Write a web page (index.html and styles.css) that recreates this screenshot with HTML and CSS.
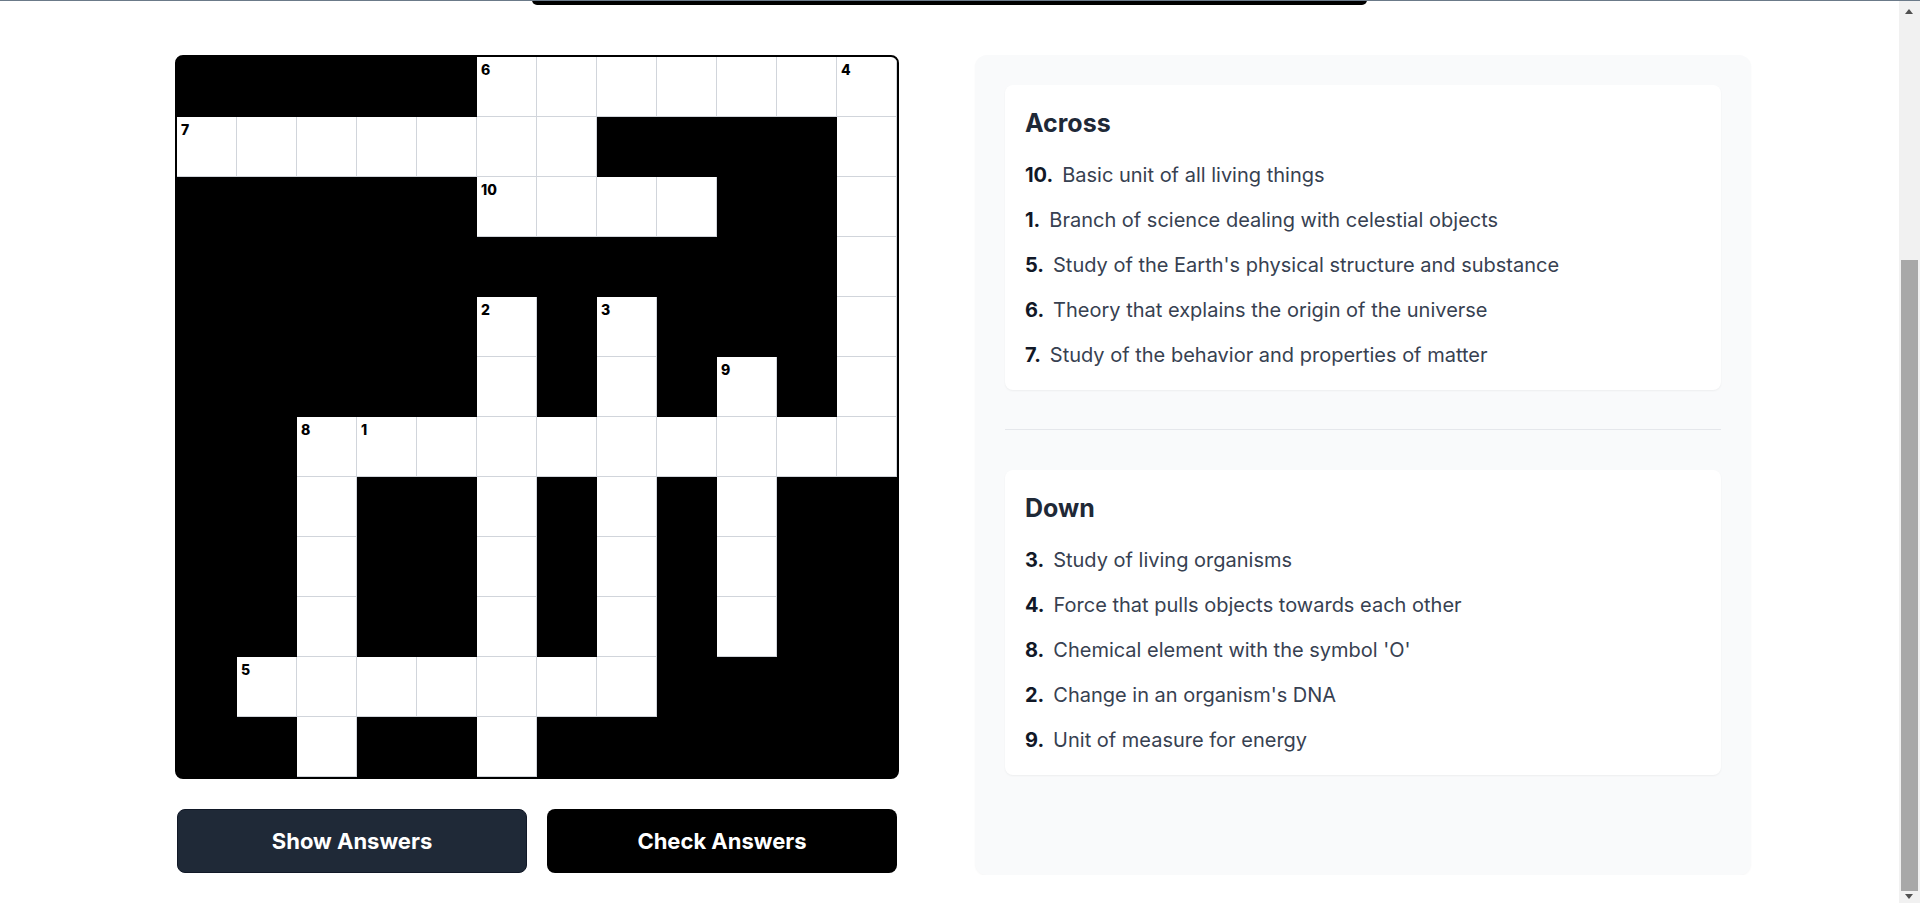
FILE: index.html
```html
<!DOCTYPE html>
<html lang="en">
<head>
<meta charset="utf-8">
<title>Science Crossword</title>
<link rel="stylesheet" href="styles.css">
</head>
<body>
<div class="frame-line"></div>
<div class="scrollbar" aria-hidden="true">
  <span class="arrow arrow-up"></span>
  <span class="thumb"></span>
  <span class="arrow arrow-down"></span>
</div>
<div class="page">
  <div class="top-tab"></div>
  <main class="layout">
    <section class="board">
      <div class="grid">
        <div class="cell block"></div><div class="cell block"></div><div class="cell block"></div><div class="cell block"></div><div class="cell block"></div><div class="cell"><span class="num">6</span></div><div class="cell"></div><div class="cell"></div><div class="cell"></div><div class="cell"></div><div class="cell"></div><div class="cell"><span class="num">4</span></div>
        <div class="cell"><span class="num">7</span></div><div class="cell"></div><div class="cell"></div><div class="cell"></div><div class="cell"></div><div class="cell"></div><div class="cell"></div><div class="cell block"></div><div class="cell block"></div><div class="cell block"></div><div class="cell block"></div><div class="cell"></div>
        <div class="cell block"></div><div class="cell block"></div><div class="cell block"></div><div class="cell block"></div><div class="cell block"></div><div class="cell"><span class="num">10</span></div><div class="cell"></div><div class="cell"></div><div class="cell"></div><div class="cell block"></div><div class="cell block"></div><div class="cell"></div>
        <div class="cell block"></div><div class="cell block"></div><div class="cell block"></div><div class="cell block"></div><div class="cell block"></div><div class="cell block"></div><div class="cell block"></div><div class="cell block"></div><div class="cell block"></div><div class="cell block"></div><div class="cell block"></div><div class="cell"></div>
        <div class="cell block"></div><div class="cell block"></div><div class="cell block"></div><div class="cell block"></div><div class="cell block"></div><div class="cell"><span class="num">2</span></div><div class="cell block"></div><div class="cell"><span class="num">3</span></div><div class="cell block"></div><div class="cell block"></div><div class="cell block"></div><div class="cell"></div>
        <div class="cell block"></div><div class="cell block"></div><div class="cell block"></div><div class="cell block"></div><div class="cell block"></div><div class="cell"></div><div class="cell block"></div><div class="cell"></div><div class="cell block"></div><div class="cell"><span class="num">9</span></div><div class="cell block"></div><div class="cell"></div>
        <div class="cell block"></div><div class="cell block"></div><div class="cell"><span class="num">8</span></div><div class="cell"><span class="num">1</span></div><div class="cell"></div><div class="cell"></div><div class="cell"></div><div class="cell"></div><div class="cell"></div><div class="cell"></div><div class="cell"></div><div class="cell"></div>
        <div class="cell block"></div><div class="cell block"></div><div class="cell"></div><div class="cell block"></div><div class="cell block"></div><div class="cell"></div><div class="cell block"></div><div class="cell"></div><div class="cell block"></div><div class="cell"></div><div class="cell block"></div><div class="cell block"></div>
        <div class="cell block"></div><div class="cell block"></div><div class="cell"></div><div class="cell block"></div><div class="cell block"></div><div class="cell"></div><div class="cell block"></div><div class="cell"></div><div class="cell block"></div><div class="cell"></div><div class="cell block"></div><div class="cell block"></div>
        <div class="cell block"></div><div class="cell block"></div><div class="cell"></div><div class="cell block"></div><div class="cell block"></div><div class="cell"></div><div class="cell block"></div><div class="cell"></div><div class="cell block"></div><div class="cell"></div><div class="cell block"></div><div class="cell block"></div>
        <div class="cell block"></div><div class="cell"><span class="num">5</span></div><div class="cell"></div><div class="cell"></div><div class="cell"></div><div class="cell"></div><div class="cell"></div><div class="cell"></div><div class="cell block"></div><div class="cell block"></div><div class="cell block"></div><div class="cell block"></div>
        <div class="cell block"></div><div class="cell block"></div><div class="cell"></div><div class="cell block"></div><div class="cell block"></div><div class="cell"></div><div class="cell block"></div><div class="cell block"></div><div class="cell block"></div><div class="cell block"></div><div class="cell block"></div><div class="cell block"></div>
      </div>
      <div class="actions">
        <button class="btn btn-show" type="button">Show Answers</button>
        <button class="btn btn-check" type="button">Check Answers</button>
      </div>
    </section>
    <aside class="panel">
      <div class="card">
        <h2 class="card-title">Across</h2>
        <ul class="clues">
          <li><span class="clue-num">10.</span>Basic unit of all living things</li>
          <li><span class="clue-num">1.</span>Branch of science dealing with celestial objects</li>
          <li><span class="clue-num">5.</span>Study of the Earth's physical structure and substance</li>
          <li><span class="clue-num">6.</span>Theory that explains the origin of the universe</li>
          <li><span class="clue-num">7.</span>Study of the behavior and properties of matter</li>
        </ul>
      </div>
      <hr class="divider">
      <div class="card">
        <h2 class="card-title">Down</h2>
        <ul class="clues">
          <li><span class="clue-num">3.</span>Study of living organisms</li>
          <li><span class="clue-num">4.</span>Force that pulls objects towards each other</li>
          <li><span class="clue-num">8.</span>Chemical element with the symbol 'O'</li>
          <li><span class="clue-num">2.</span>Change in an organism's DNA</li>
          <li><span class="clue-num">9.</span>Unit of measure for energy</li>
        </ul>
      </div>
    </aside>
  </main>
</div>
</body>
</html>
```

FILE: styles.css
```css
* { box-sizing: border-box; }

html, body {
  margin: 0;
  padding: 0;
  background: #ffffff;
}

body {
  font-family: Inter, "Noto Sans", "Liberation Sans", sans-serif;
  color: #111827;
}

.frame-line {
  position: fixed;
  top: 0;
  left: 0;
  right: 0;
  height: 1px;
  background: #6b7a89;
  z-index: 10;
}

/* drawn window scrollbar (page is shown scrolled) */
.scrollbar {
  position: fixed;
  top: 0;
  right: 0;
  bottom: 0;
  width: 21px;
  background: #f1f1f1;
  z-index: 5;
}

.thumb {
  position: absolute;
  top: 260px;
  left: 2px;
  right: 2px;
  height: 631px;
  background: #a8a8a8;
}

.arrow {
  position: absolute;
  left: 6px;
  width: 0;
  height: 0;
  border-left: 4.5px solid transparent;
  border-right: 4.5px solid transparent;
}

.arrow-up {
  top: 9px;
  border-bottom: 5px solid #505050;
}

.arrow-down {
  bottom: 4px;
  border-top: 5px solid #505050;
}

.page {
  padding-right: 21px;
}

.top-tab {
  width: 835px;
  height: 5px;
  margin: 0 auto;
  background: #000;
  border-radius: 0 0 6px 6px;
}

.layout {
  margin-top: 50px;
  margin-left: 175px;
  display: grid;
  grid-template-columns: 776px 776px;
  column-gap: 24px;
  align-items: stretch;
}

.board {
  display: flex;
  flex-direction: column;
  align-items: flex-start;
}

.grid {
  display: grid;
  grid-template-columns: repeat(12, 60px);
  grid-auto-rows: 60px;
  border: 2px solid #000;
  border-radius: 8px;
  overflow: hidden;
  background: #000;
}

.cell {
  position: relative;
  background: #fff;
  border-right: 1px solid #d1d5db;
  border-bottom: 1px solid #d1d5db;
}

.cell.block {
  background: #000;
  border-color: #000;
}

.num {
  position: absolute;
  top: 5px;
  left: 4px;
  font-size: 14px;
  line-height: 16px;
  font-weight: 800;
  color: #000;
}

.actions {
  margin-top: 30px;
  width: 720px;
  margin-left: 2px;
  display: grid;
  grid-template-columns: 1fr 1fr;
  column-gap: 20px;
}

.btn {
  height: 64px;
  border: none;
  border-radius: 8px;
  color: #fff;
  font-family: Inter, "Noto Sans", "Liberation Sans", sans-serif;
  font-size: 22px;
  font-weight: 700;
  cursor: pointer;
}

.btn-show {
  background: #1f2937;
  border: 1px solid #111827;
}

.btn-check {
  background: #000;
}

.panel {
  min-height: 820px;
  background: #f9fafb;
  border-radius: 12px;
  padding: 30px;
  box-shadow: 0 1px 2px rgba(0, 0, 0, 0.04);
}

.card {
  background: #fff;
  border-radius: 8px;
  padding: 20px;
  box-shadow: 0 1px 2px rgba(0, 0, 0, 0.05);
}

.card-title {
  margin: 0 0 19px;
  font-size: 25px;
  line-height: 37px;
  font-weight: 700;
  color: #1f2937;
}

.clues {
  list-style: none;
  margin: 0;
  padding: 0;
  display: flex;
  flex-direction: column;
  gap: 16px;
}

.clues li {
  font-size: 20px;
  line-height: 29px;
  color: #374151;
}

.clue-num {
  font-weight: 700;
  color: #111827;
  margin-right: 9px;
}

.divider {
  margin: 39px 0 40px;
  border: none;
  border-top: 1px solid #e5e7eb;
  height: 0;
}
```
